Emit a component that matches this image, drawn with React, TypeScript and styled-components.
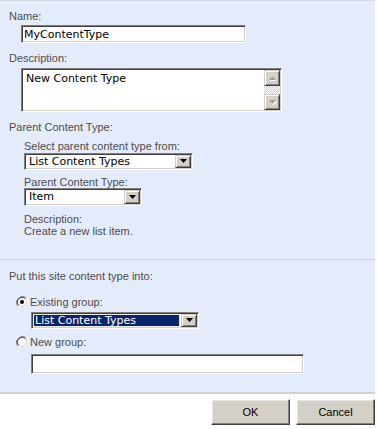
import React from "react";
import styled, { createGlobalStyle } from "styled-components";

const Global = createGlobalStyle`
  html, body { margin: 0; padding: 0; background: #ffffff; }
  body { width: 378px; height: 429px; overflow: hidden; }
  * { box-sizing: border-box; }
`;

const Page = styled.div`
  width: 378px;
  height: 429px;
  display: flex;
  flex-direction: column;
  font-family: "Liberation Sans", Arial, sans-serif;
  font-size: 11px;
  color: #4c4c4c;
`;

const Panel = styled.div`
  background: #e4ecfb;
  margin-right: 3px;
  border-top: 1px solid #d3dae6;
  border-bottom: 2px solid #d0d0d0;
  display: flex;
  flex-direction: column;
`;

const Section = styled.div<{ $pt: number; $pb: number }>`
  display: flex;
  flex-direction: column;
  align-items: flex-start;
  padding: ${(p) => p.$pt}px 0 ${(p) => p.$pb}px 9px;
`;

const Divider = styled.div`
  height: 1px;
  background: #cdd5e3;
`;

const Label = styled.div<{ $mt?: number }>`
  line-height: 12px;
  margin-top: ${(p) => p.$mt ?? 0}px;
  white-space: nowrap;
`;

const Indent = styled.div<{ $ml: number; $mt?: number }>`
  display: flex;
  flex-direction: column;
  align-items: flex-start;
  margin-left: ${(p) => p.$ml}px;
  margin-top: ${(p) => p.$mt ?? 0}px;
`;

const TextBox = styled.div<{ $w: number; $h: number; $mt?: number }>`
  width: ${(p) => p.$w}px;
  height: ${(p) => p.$h}px;
  margin-top: ${(p) => p.$mt ?? 0}px;
  background: #ffffff;
  border: 1px solid;
  border-color: #808080 #ffffff #ffffff #808080;
  box-shadow: inset 1px 1px 0 #404040, inset -1px -1px 0 #d4d0c8;
  padding: 2px 3px 0 2px;
  font-family: "DejaVu Sans", Verdana, sans-serif;
  font-size: 11px;
  line-height: 13px;
  color: #000000;
  white-space: nowrap;
  overflow: hidden;
`;

const TextArea = styled.div<{ $w: number; $h: number; $mt?: number }>`
  width: ${(p) => p.$w}px;
  height: ${(p) => p.$h}px;
  margin-top: ${(p) => p.$mt ?? 0}px;
  background: #ffffff;
  border: 1px solid;
  border-color: #808080 #ffffff #ffffff #808080;
  box-shadow: inset 1px 1px 0 #404040, inset -1px -1px 0 #d4d0c8;
  padding: 1px;
  display: flex;
`;

const AreaText = styled.div`
  flex: 1;
  padding: 2px 3px;
  font-family: "DejaVu Sans", Verdana, sans-serif;
  font-size: 11px;
  line-height: 13px;
  color: #000000;
`;

const ScrollBar = styled.div`
  width: 16px;
  display: flex;
  flex-direction: column;
`;

const ScrollButton = styled.div`
  width: 16px;
  height: 16px;
  background: #d4d0c8;
  border: 1px solid;
  border-color: #d4d0c8 #404040 #404040 #d4d0c8;
  box-shadow: inset 1px 1px 0 #ffffff, inset -1px -1px 0 #808080;
  display: flex;
  align-items: center;
  justify-content: center;
`;

const ScrollTrack = styled.div`
  flex: 1;
  background-color: #ffffff;
  background-image: repeating-conic-gradient(#d4d0c8 0 25%, #ffffff 0 50%);
  background-size: 2px 2px;
`;

const Select = styled.div<{ $w: number; $h: number; $mt?: number }>`
  width: ${(p) => p.$w}px;
  height: ${(p) => p.$h}px;
  margin-top: ${(p) => p.$mt ?? 0}px;
  background: #ffffff;
  border: 1px solid;
  border-color: #808080 #ffffff #ffffff #808080;
  box-shadow: inset 1px 1px 0 #404040, inset -1px -1px 0 #d4d0c8;
  padding: 1px;
  display: flex;
`;

const SelectValue = styled.div<{ $focus?: boolean }>`
  flex: 1;
  margin: ${(p) => (p.$focus ? "1px 2px 1px 1px" : "0")};
  padding: ${(p) => (p.$focus ? "0 0 0 1px" : "0 0 0 3px")};
  font-family: "DejaVu Sans", Verdana, sans-serif;
  font-size: 11px;
  line-height: ${(p) => (p.$focus ? "11px" : "13px")};
  color: ${(p) => (p.$focus ? "#ffffff" : "#000000")};
  background: ${(p) => (p.$focus ? "#0a246a" : "transparent")};
  outline: ${(p) => (p.$focus ? "1px dotted #f0e68c" : "none")};
  white-space: nowrap;
  overflow: hidden;
`;

const DropButton = styled.div`
  width: 16px;
  background: #d4d0c8;
  border: 1px solid;
  border-color: #d4d0c8 #404040 #404040 #d4d0c8;
  box-shadow: inset 1px 1px 0 #ffffff, inset -1px -1px 0 #808080;
  display: flex;
  align-items: center;
  justify-content: center;
`;

const RadioRow = styled.div<{ $mt?: number }>`
  display: flex;
  align-items: center;
  gap: 2px;
  margin-top: ${(p) => p.$mt ?? 0}px;
  margin-left: 7px;
  line-height: 12px;
`;

const Footer = styled.div`
  display: flex;
  justify-content: flex-end;
  gap: 6px;
  padding: 5px 3px 0 0;
`;

const Button = styled.div`
  width: 79px;
  height: 26px;
  background: #d4d0c8;
  border: 1px solid;
  border-color: #ffffff #404040 #404040 #ffffff;
  box-shadow: inset -1px -1px 0 #808080, inset 1px 1px 0 #e8e6e0;
  display: flex;
  align-items: center;
  justify-content: center;
  font-family: "Liberation Sans", Arial, sans-serif;
  font-size: 11px;
  color: #000000;
`;

const Arrow = ({ up, disabled }: { up?: boolean; disabled?: boolean }) => (
  <svg width="7" height="5" viewBox="0 0 7 5">
    {disabled && (
      <path d={up ? "M1 5 L4 2 L7 5 Z" : "M1 1 L8 1 L4.5 5 Z"} fill="#ffffff" />
    )}
    <path
      d={up ? "M0 4 L3.5 0.5 L7 4 Z" : "M0 0 L7 0 L3.5 4 Z"}
      fill={disabled ? "#a0a0a0" : "#000000"}
    />
  </svg>
);

const Radio = ({ checked }: { checked?: boolean }) => (
  <svg width="12" height="12" viewBox="0 0 12 12">
    <path d="M10.2 1.8 A6 6 0 0 0 1.8 10.2" stroke="#808080" strokeWidth="1" fill="none" />
    <path d="M1.8 10.2 A6 6 0 0 0 10.2 1.8" stroke="#ffffff" strokeWidth="1" fill="none" />
    <circle cx="6" cy="6" r="4.5" fill="#ffffff" />
    <path d="M9.2 2.8 A4.5 4.5 0 0 0 2.8 9.2" stroke="#404040" strokeWidth="1" fill="none" />
    <path d="M2.8 9.2 A4.5 4.5 0 0 0 9.2 2.8" stroke="#d4d0c8" strokeWidth="1" fill="none" />
    {checked && <circle cx="6" cy="6" r="2" fill="#000000" />}
  </svg>
);

export default function App() {
  return (
    <Page>
      <Global />
      <Panel>
        <Section $pt={9} $pb={22}>
          <Label>Name:</Label>
          <Indent $ml={12} $mt={3}>
            <TextBox $w={225} $h={18}>MyContentType</TextBox>
          </Indent>
          <Label $mt={9}>Description:</Label>
          <Indent $ml={12} $mt={4}>
            <TextArea $w={261} $h={44}>
              <AreaText>New Content Type</AreaText>
              <ScrollBar>
                <ScrollButton>
                  <Arrow up disabled />
                </ScrollButton>
                <ScrollTrack />
                <ScrollButton>
                  <Arrow disabled />
                </ScrollButton>
              </ScrollBar>
            </TextArea>
          </Indent>
          <Label $mt={9}>Parent Content Type:</Label>
          <Indent $ml={15} $mt={7}>
            <Label>Select parent content type from:</Label>
            <Select $w={169} $h={17} $mt={1}>
              <SelectValue>List Content Types</SelectValue>
              <DropButton>
                <Arrow />
              </DropButton>
            </Select>
            <Label $mt={6}>Parent Content Type:</Label>
            <Select $w={118} $h={18}>
              <SelectValue>Item</SelectValue>
              <DropButton>
                <Arrow />
              </DropButton>
            </Select>
            <Label $mt={7}>Description:</Label>
            <Label>Create a new list item.</Label>
          </Indent>
        </Section>
        <Divider />
        <Section $pt={10} $pb={18}>
          <Label>Put this site content type into:</Label>
          <RadioRow $mt={14}>
            <Radio checked />
            <span>Existing group:</span>
          </RadioRow>
          <Indent $ml={22} $mt={4}>
            <Select $w={168} $h={17}>
              <SelectValue $focus>List Content Types</SelectValue>
              <DropButton>
                <Arrow />
              </DropButton>
            </Select>
          </Indent>
          <RadioRow $mt={7}>
            <Radio />
            <span>New group:</span>
          </RadioRow>
          <Indent $ml={22} $mt={6}>
            <TextBox $w={273} $h={20} />
          </Indent>
        </Section>
      </Panel>
      <Footer>
        <Button>OK</Button>
        <Button>Cancel</Button>
      </Footer>
    </Page>
  );
}
